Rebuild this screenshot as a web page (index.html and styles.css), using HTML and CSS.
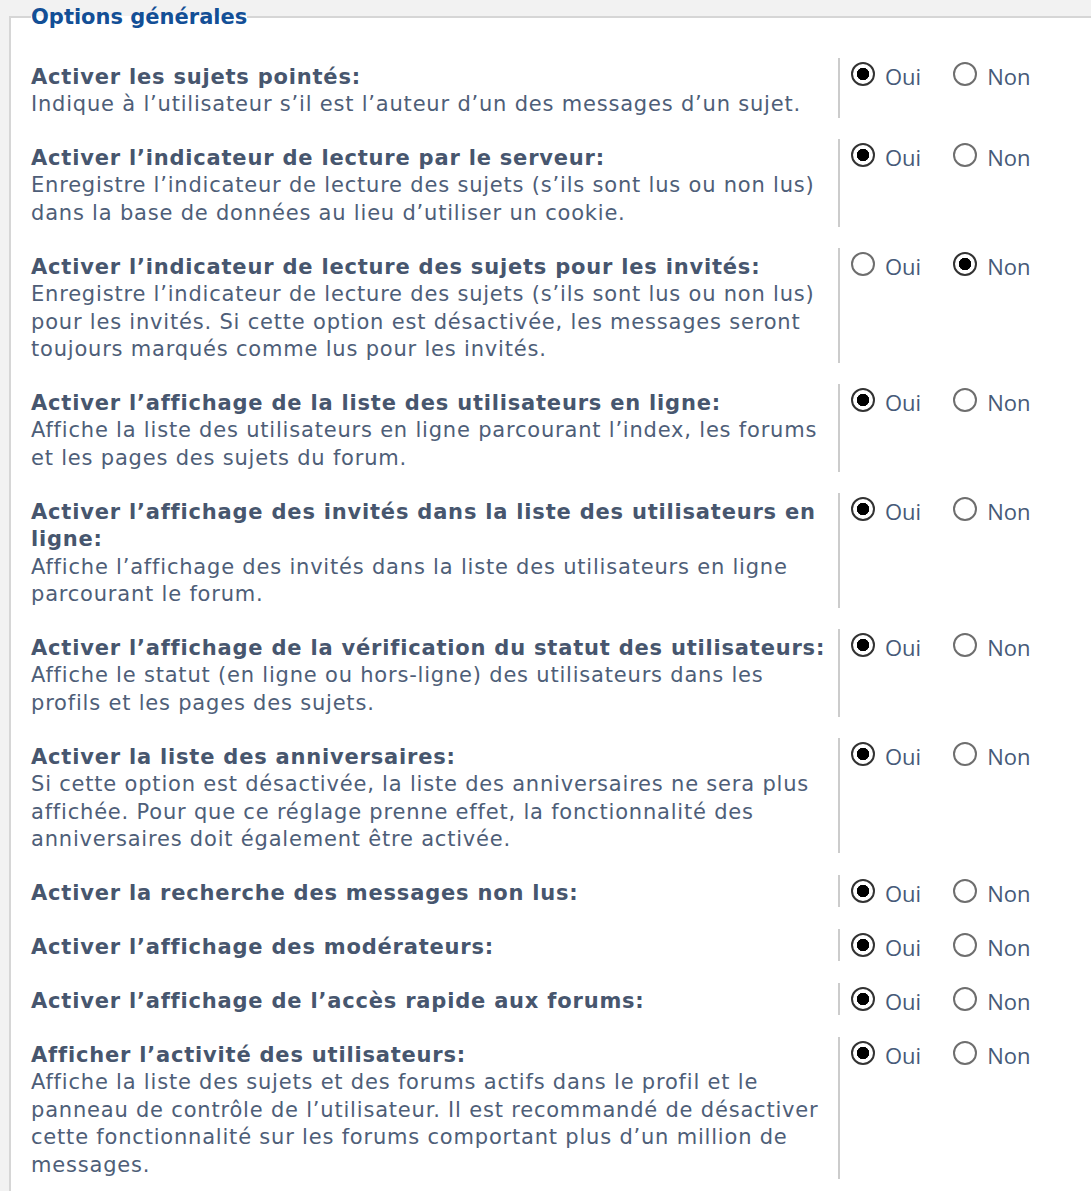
FILE: index.html
```html
<!DOCTYPE html>
<html lang="fr">
<head>
<meta charset="utf-8">
<title>Options générales</title>
<link rel="stylesheet" href="styles.css">
</head>
<body>
<fieldset class="panel">
  <legend class="panel-title">Options générales</legend>

  <div class="row">
    <div class="row-text">
      <div class="row-label">Activer les sujets pointés:</div>
      <div class="row-explain">Indique à l’utilisateur s’il est l’auteur d’un des messages d’un sujet.</div>
    </div>
    <div class="row-opts">
      <label class="opt"><input type="radio" name="r1" checked><span>Oui</span></label>
      <label class="opt"><input type="radio" name="r1"><span>Non</span></label>
    </div>
  </div>

  <div class="row">
    <div class="row-text">
      <div class="row-label">Activer l’indicateur de lecture par le serveur:</div>
      <div class="row-explain">Enregistre l’indicateur de lecture des sujets (s’ils sont lus ou non lus) dans la base de données au lieu d’utiliser un cookie.</div>
    </div>
    <div class="row-opts">
      <label class="opt"><input type="radio" name="r2" checked><span>Oui</span></label>
      <label class="opt"><input type="radio" name="r2"><span>Non</span></label>
    </div>
  </div>

  <div class="row">
    <div class="row-text">
      <div class="row-label">Activer l’indicateur de lecture des sujets pour les invités:</div>
      <div class="row-explain">Enregistre l’indicateur de lecture des sujets (s’ils sont lus ou non lus) pour les invités. Si cette option est désactivée, les messages seront toujours marqués comme lus pour les invités.</div>
    </div>
    <div class="row-opts">
      <label class="opt"><input type="radio" name="r3"><span>Oui</span></label>
      <label class="opt"><input type="radio" name="r3" checked><span>Non</span></label>
    </div>
  </div>

  <div class="row">
    <div class="row-text">
      <div class="row-label">Activer l’affichage de la liste des utilisateurs en ligne:</div>
      <div class="row-explain">Affiche la liste des utilisateurs en ligne parcourant l’index, les forums et les pages des sujets du forum.</div>
    </div>
    <div class="row-opts">
      <label class="opt"><input type="radio" name="r4" checked><span>Oui</span></label>
      <label class="opt"><input type="radio" name="r4"><span>Non</span></label>
    </div>
  </div>

  <div class="row">
    <div class="row-text">
      <div class="row-label">Activer l’affichage des invités dans la liste des utilisateurs en ligne:</div>
      <div class="row-explain">Affiche l’affichage des invités dans la liste des utilisateurs en ligne parcourant le forum.</div>
    </div>
    <div class="row-opts">
      <label class="opt"><input type="radio" name="r5" checked><span>Oui</span></label>
      <label class="opt"><input type="radio" name="r5"><span>Non</span></label>
    </div>
  </div>

  <div class="row">
    <div class="row-text">
      <div class="row-label">Activer l’affichage de la vérification du statut des utilisateurs:</div>
      <div class="row-explain">Affiche le statut (en ligne ou hors-ligne) des utilisateurs dans les profils et les pages des sujets.</div>
    </div>
    <div class="row-opts">
      <label class="opt"><input type="radio" name="r6" checked><span>Oui</span></label>
      <label class="opt"><input type="radio" name="r6"><span>Non</span></label>
    </div>
  </div>

  <div class="row">
    <div class="row-text">
      <div class="row-label">Activer la liste des anniversaires:</div>
      <div class="row-explain">Si cette option est désactivée, la liste des anniversaires ne sera plus affichée. Pour que ce réglage prenne effet, la fonctionnalité des anniversaires doit également être activée.</div>
    </div>
    <div class="row-opts">
      <label class="opt"><input type="radio" name="r7" checked><span>Oui</span></label>
      <label class="opt"><input type="radio" name="r7"><span>Non</span></label>
    </div>
  </div>

  <div class="row">
    <div class="row-text">
      <div class="row-label">Activer la recherche des messages non lus:</div>
    </div>
    <div class="row-opts">
      <label class="opt"><input type="radio" name="r8" checked><span>Oui</span></label>
      <label class="opt"><input type="radio" name="r8"><span>Non</span></label>
    </div>
  </div>

  <div class="row">
    <div class="row-text">
      <div class="row-label">Activer l’affichage des modérateurs:</div>
    </div>
    <div class="row-opts">
      <label class="opt"><input type="radio" name="r9" checked><span>Oui</span></label>
      <label class="opt"><input type="radio" name="r9"><span>Non</span></label>
    </div>
  </div>

  <div class="row">
    <div class="row-text">
      <div class="row-label">Activer l’affichage de l’accès rapide aux forums:</div>
    </div>
    <div class="row-opts">
      <label class="opt"><input type="radio" name="r10" checked><span>Oui</span></label>
      <label class="opt"><input type="radio" name="r10"><span>Non</span></label>
    </div>
  </div>

  <div class="row">
    <div class="row-text">
      <div class="row-label">Afficher l’activité des utilisateurs:</div>
      <div class="row-explain">Affiche la liste des sujets et des forums actifs dans le profil et le panneau de contrôle de l’utilisateur. Il est recommandé de désactiver cette fonctionnalité sur les forums comportant plus d’un million de messages.</div>
    </div>
    <div class="row-opts">
      <label class="opt"><input type="radio" name="r11" checked><span>Oui</span></label>
      <label class="opt"><input type="radio" name="r11"><span>Non</span></label>
    </div>
  </div>
</fieldset>
</body>
</html>
```

FILE: styles.css
```css
html, body {
  margin: 0;
  padding: 0;
  overflow: hidden;
}

body {
  background: #f2f2f2;
  font-family: "DejaVu Sans", Verdana, sans-serif;
  color: #4a5a73;
  padding-top: 2px;
}

.panel {
  margin: 0 0 0 9px;
  width: 1120px;
  box-sizing: border-box;
  border: 2px solid #d6d6d6;
  background: #ffffff;
  padding: 26px 0 20px 20px;
  min-width: 0;
}

.panel-title {
  padding: 0;
  font-family: "DejaVu Sans", Verdana, sans-serif;
  font-weight: bold;
  font-size: 21px;
  line-height: 30px;
  color: #134f96;
}

.row {
  display: flex;
  align-items: stretch;
  margin-bottom: 21.1px;
}

.row-text {
  width: 807px;
  flex: none;
  box-sizing: border-box;
  padding: 5.5px 7px 0 0;
  font-size: 21px;
  line-height: 27.4px;
  letter-spacing: 0.8px;
}

.row-label {
  font-weight: bold;
  color: #47566e;
  letter-spacing: 0.8px;
}

.row-explain {
  color: #4e5e78;
}

.row-opts {
  border-left: 2px solid #cccccc;
  padding: 4px 0 0 11px;
  display: flex;
  align-items: flex-start;
  gap: 32px;
}

.opt {
  display: flex;
  align-items: center;
  gap: 10px;
  font-family: "Open Sans", "Noto Sans", sans-serif;
  font-size: 22px;
  line-height: 28px;
  color: #465a78;
}

.opt input {
  appearance: none;
  -webkit-appearance: none;
  margin: 0;
  width: 24px;
  height: 24px;
  border: 2px solid #6e6e6e;
  border-radius: 50%;
  background: #ffffff;
  box-sizing: border-box;
  flex: none;
  position: relative;
  top: -2px;
}

.opt input:checked {
  border-color: #333333;
  background: radial-gradient(circle, #000000 0 6px, #ffffff 6.5px);
}
```
